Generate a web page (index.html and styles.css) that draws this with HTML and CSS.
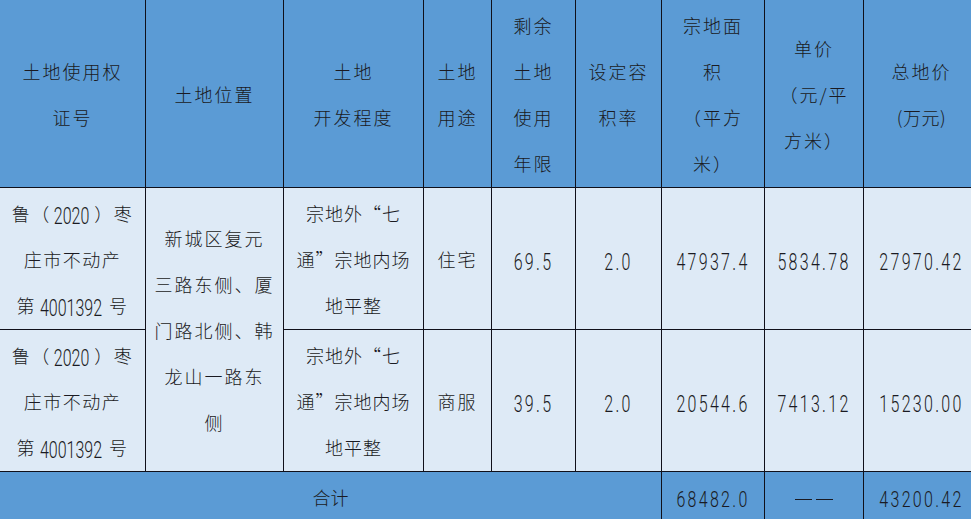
FILE: index.html
```html
<!DOCTYPE html>
<html lang="zh">
<head>
<meta charset="utf-8">
<link rel="stylesheet" href="styles.css">
</head>
<body>
<div class="wrap">
<table class="land">
  <colgroup>
    <col class="c1"><col class="c2"><col class="c3"><col class="c4"><col class="c5"><col class="c6"><col class="c7"><col class="c8"><col class="c9">
  </colgroup>
  <thead>
    <tr class="head">
      <th>土地使用权<br>证号</th>
      <th>土地位置</th>
      <th>土地<br>开发程度</th>
      <th>土地<br>用途</th>
      <th>剩余<br>土地<br>使用<br>年限</th>
      <th>设定容<br>积率</th>
      <th>宗地面<br>积<br>（平方<br>米）</th>
      <th>单价<br>（元/平<br>方米）</th>
      <th>总地价<br><span class="tight">(万元)</span></th>
    </tr>
  </thead>
  <tbody>
    <tr class="row">
      <td class="cert">鲁（<span class="d p">2020</span>）枣<br>庄市不动产<br>第<span class="d s">4001392</span>号</td>
      <td rowspan="2" class="loc">新城区复元<br>三路东侧、厦<br>门路北侧、韩<br>龙山一路东<br>侧</td>
      <td class="dev">宗地外“七<br>通”宗地内场<br>地平整</td>
      <td>住宅</td>
      <td><span class="n">69.5</span></td>
      <td><span class="n">2.0</span></td>
      <td><span class="n">47937.4</span></td>
      <td><span class="n">5834.78</span></td>
      <td><span class="n">27970.42</span></td>
    </tr>
    <tr class="row">
      <td class="cert">鲁（<span class="d p">2020</span>）枣<br>庄市不动产<br>第<span class="d s">4001392</span>号</td>
      <td class="dev">宗地外“七<br>通”宗地内场<br>地平整</td>
      <td>商服</td>
      <td><span class="n">39.5</span></td>
      <td><span class="n">2.0</span></td>
      <td><span class="n">20544.6</span></td>
      <td><span class="n">7413.12</span></td>
      <td><span class="n">15230.00</span></td>
    </tr>
  </tbody>
  <tfoot>
    <tr class="foot">
      <td colspan="6" class="sum">合计</td>
      <td><span class="f">68482.0</span></td>
      <td><span class="dash"></span><span class="dash"></span></td>
      <td><span class="f">43200.42</span></td>
    </tr>
  </tfoot>
</table>
</div>
</body>
</html>
```
FILE: styles.css
```css
html, body {
  margin: 0;
  padding: 0;
  background: #5b9bd5;
}
.wrap {
  width: 971px;
  height: 519px;
  overflow: hidden;
}
.land {
  border-collapse: collapse;
  table-layout: fixed;
  width: 980px;
  margin-top: -1px;
  margin-left: -1px;
  font-family: "Noto Sans CJK SC", sans-serif;
  font-weight: 300;
  color: #1a1a22;
  font-size: 18px;
  letter-spacing: 2px;
}
.c1 { width: 146px; }
.c2 { width: 138px; }
.c3 { width: 140px; }
.c4 { width: 68px; }
.c5 { width: 84px; }
.c6 { width: 86px; }
.c7 { width: 103px; }
.c8 { width: 99px; }
.c9 { width: 116px; }
.land th, .land td {
  border: 1px solid #10101a;
  text-align: center;
  vertical-align: middle;
  padding: 0;
  font-weight: 300;
  line-height: 46px;
  white-space: nowrap;
}
.head th {
  background: #5b9bd5;
  height: 187px;
}
.tight { letter-spacing: 0.5px; }
.row td {
  background: #deeaf6;
  height: 141px;
}
.cert { letter-spacing: 1.5px; }
.dev { letter-spacing: 1px; }
.d {
  display: inline-block;
  font-family: Roboto, "Liberation Sans", sans-serif;
  font-weight: 300;
  font-size: 16px;
  line-height: 16px;
  letter-spacing: 0;
  transform: scaleY(1.5);
}
.d.p { margin: 0 5px 0 3px; }
.d.s { margin: 0 7px 0 4px; }
.n {
  display: inline-block;
  font-family: Roboto, "Liberation Sans", sans-serif;
  font-weight: 300;
  font-size: 16px;
  line-height: 16px;
  letter-spacing: 2.3px;
  transform: scaleY(1.5);
}
.foot td {
  background: #5b9bd5;
  height: 49px;
  letter-spacing: 0;
}
.sum { letter-spacing: 0; }
.f {
  display: inline-block;
  font-family: Roboto, "Liberation Sans", sans-serif;
  font-weight: 300;
  font-size: 16px;
  line-height: 16px;
  letter-spacing: 2.3px;
  transform: scaleY(1.4);
}
.dash {
  display: inline-block;
  width: 17px;
  height: 1px;
  margin: 0 2px;
  background: #1a1a22;
  vertical-align: middle;
}
```
